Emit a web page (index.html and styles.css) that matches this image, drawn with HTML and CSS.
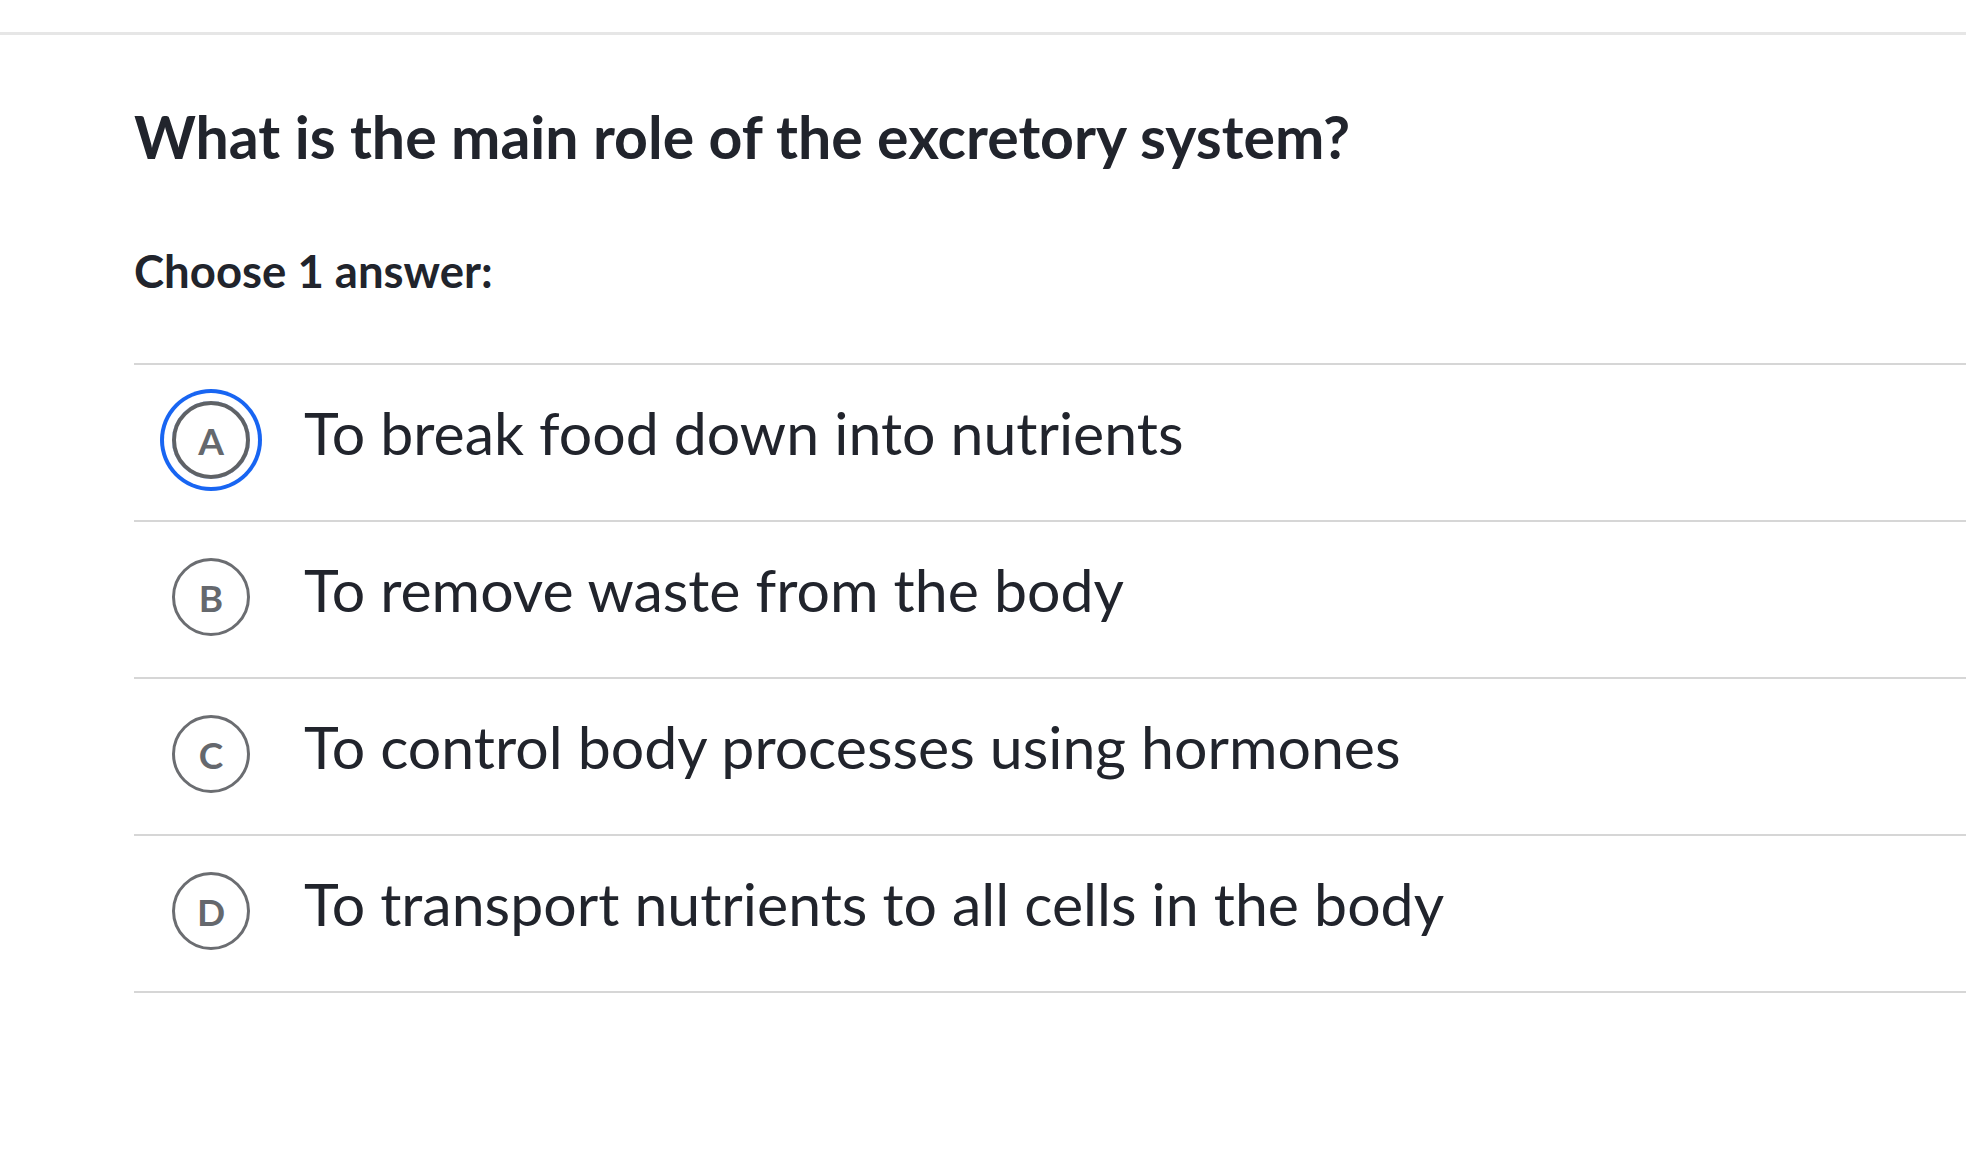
FILE: index.html
```html
<!DOCTYPE html>
<html lang="en">
<head>
<meta charset="utf-8">
<title>Question</title>
<link rel="stylesheet" href="styles.css">
</head>
<body>
<header class="topbar"></header>
<main class="question">
  <h1 class="prompt">What is the main role of the excretory system?</h1>
  <p class="instruction">Choose 1 answer:</p>
  <ul class="choices">
    <li class="choice is-focused">
      <span class="badge">A</span>
      <span class="choice-text">To break food down into nutrients</span>
    </li>
    <li class="choice">
      <span class="badge">B</span>
      <span class="choice-text">To remove waste from the body</span>
    </li>
    <li class="choice">
      <span class="badge">C</span>
      <span class="choice-text">To control body processes using hormones</span>
    </li>
    <li class="choice">
      <span class="badge">D</span>
      <span class="choice-text">To transport nutrients to all cells in the body</span>
    </li>
  </ul>
</main>
</body>
</html>
```

FILE: styles.css
```css
html, body {
  margin: 0;
  padding: 0;
  background: #ffffff;
}

body {
  font-family: Lato, "Open Sans", "Liberation Sans", sans-serif;
  color: #21242c;
}

.topbar {
  height: 32px;
  border-bottom: 3px solid #e6e6e6;
}

.question {
  padding: 66px 0 0 134px;
}

.prompt {
  margin: 0;
  font-size: 59px;
  line-height: 72px;
  font-weight: 700;
  color: #21242c;
}

.instruction {
  margin: 71px 0 0 0;
  font-size: 45.5px;
  line-height: 54px;
  font-weight: 700;
  color: #21242c;
}

.choices {
  list-style: none;
  margin: 65px 0 0 0;
  padding: 0;
}

.choice {
  display: flex;
  align-items: center;
  min-height: 155px;
  border-top: 2px solid #d6d6d6;
  padding-left: 38px;
}

.choice:last-child {
  border-bottom: 2px solid #d6d6d6;
}

.badge {
  flex: none;
  box-sizing: border-box;
  width: 78px;
  height: 78px;
  border: 3px solid #6b6d71;
  border-radius: 50%;
  display: flex;
  align-items: center;
  justify-content: center;
  font-size: 37px;
  font-weight: 700;
  color: #65686d;
  margin-bottom: 5px;
}

.is-focused .badge {
  border-width: 4px;
  border-color: #5f6266;
  box-shadow: 0 0 0 8px #ffffff, 0 0 0 12px #1865f2;
}

.choice-text {
  margin-left: 54px;
  font-size: 59px;
  line-height: 72px;
  padding-bottom: 20px;
  color: #21242c;
}
```
